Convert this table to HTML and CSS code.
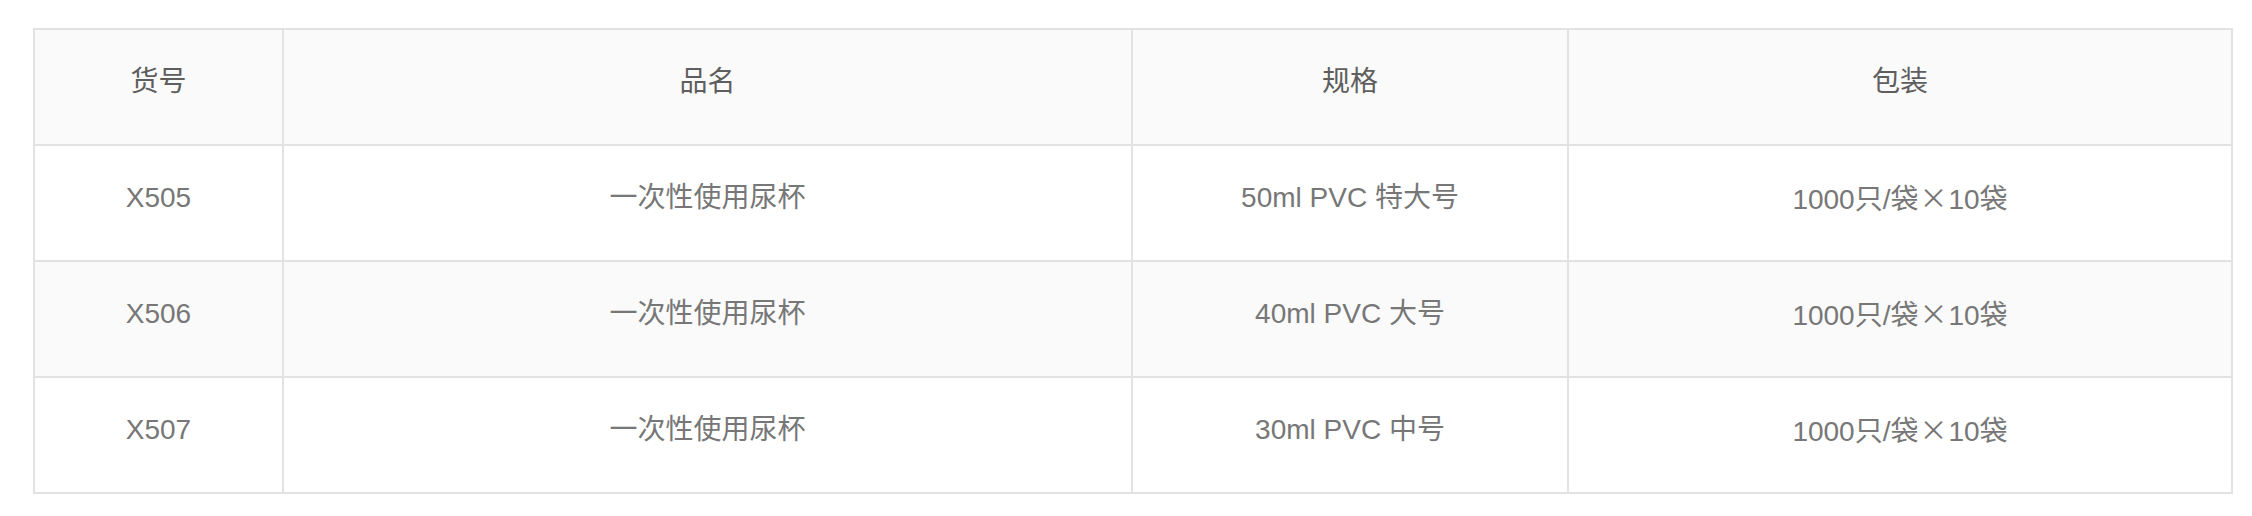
FILE: index.html
```html
<!DOCTYPE html>
<html lang="zh-CN">
<head>
<meta charset="utf-8">
<title>产品规格</title>
<link rel="stylesheet" href="styles.css">
</head>
<body>
<div class="wrap">
  <table class="spec">
    <colgroup>
      <col class="c1"><col class="c2"><col class="c3"><col class="c4">
    </colgroup>
    <thead>
      <tr><th>货号</th><th>品名</th><th>规格</th><th>包装</th></tr>
    </thead>
    <tbody>
      <tr><td>X505</td><td>一次性使用尿杯</td><td>50ml PVC 特大号</td><td>1000只/袋<span class="times">×</span>10袋</td></tr>
      <tr><td>X506</td><td>一次性使用尿杯</td><td>40ml PVC 大号</td><td>1000只/袋<span class="times">×</span>10袋</td></tr>
      <tr><td>X507</td><td>一次性使用尿杯</td><td>30ml PVC 中号</td><td>1000只/袋<span class="times">×</span>10袋</td></tr>
    </tbody>
  </table>
</div>
</body>
</html>
```
FILE: styles.css
```css
html, body {
  margin: 0;
  padding: 0;
  background: #ffffff;
}
.wrap {
  padding: 28px 19px 0 33px;
}
.spec {
  border-collapse: separate;
  border-spacing: 0;
  table-layout: fixed;
  width: 2200px;
  border-left: 2px solid #e2e2e2;
  border-top: 2px solid #e2e2e2;
  font-family: "Liberation Sans", "Noto Sans CJK SC", sans-serif;
  font-size: 28px;
}
.c1 { width: 249px; }
.c2 { width: 849px; }
.c3 { width: 436px; }
.c4 { width: 664px; }
.spec th,
.spec td {
  box-sizing: border-box;
  height: 116px;
  padding: 0 0 10px 0;
  text-align: center;
  vertical-align: middle;
  border-right: 2px solid #e2e2e2;
  border-bottom: 2px solid #e2e2e2;
  line-height: 32px;
}
.spec th {
  font-weight: normal;
  color: #5e5e5e;
  background: #fafafa;
}
.spec td {
  color: #777777;
  background: #ffffff;
}
.spec tbody tr:nth-child(even) td {
  background: #fafafa;
}
.times {
  font-family: "Noto Sans CJK SC", sans-serif;
  margin: 0 1px;
}
```
